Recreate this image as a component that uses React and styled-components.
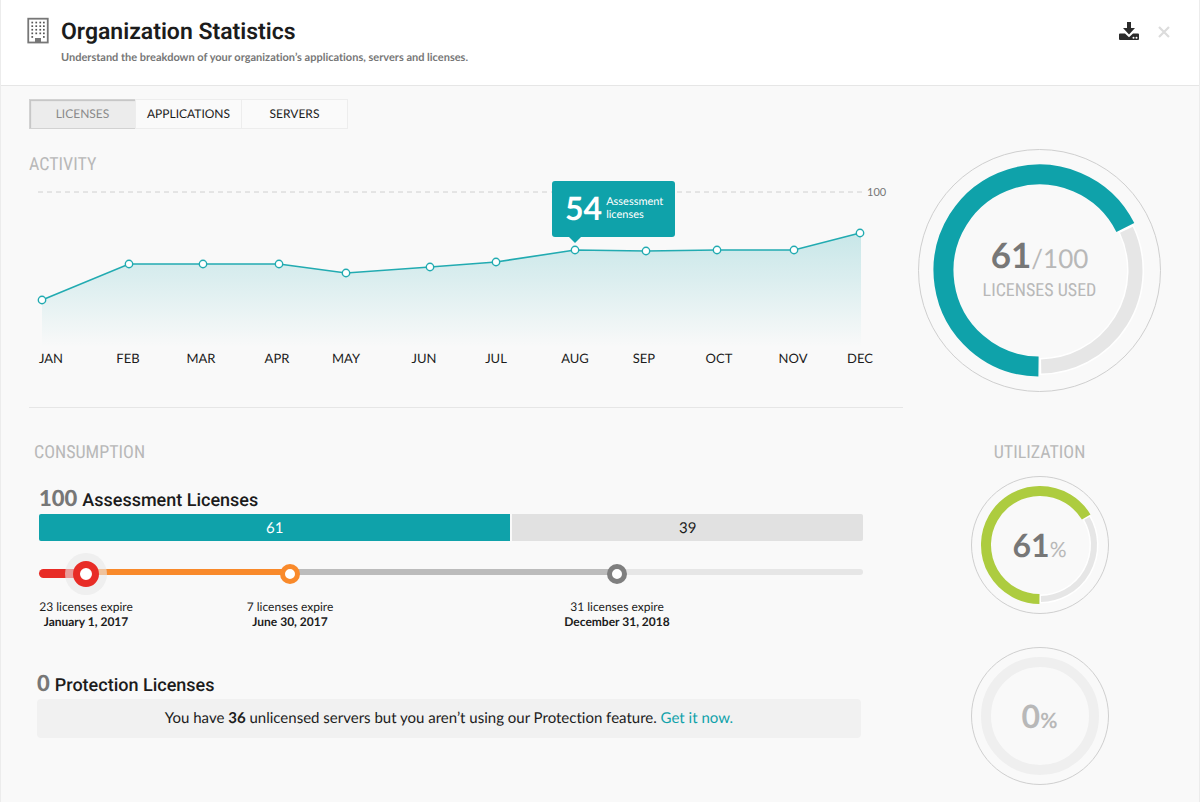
import React from 'react';
import styled, { createGlobalStyle, ThemeProvider } from 'styled-components';

const theme = {
  teal: '#0fa2aa',
  green: '#adcc3f',
  red: '#e82c26',
  orange: '#f98a2b',
  ink: '#1c1c1c',
  number: '#777',
  muted: '#b8b8b8',
  page: '#f9f9f9',
  line: '#e6e6e6',
  lato: "Lato, 'Liberation Sans', sans-serif",
  roboto: "Roboto, 'Liberation Sans', sans-serif",
  condensed: "'Roboto Condensed', 'Liberation Sans Narrow', Roboto, sans-serif",
};

const GlobalStyle = createGlobalStyle`
  *, *::before, *::after { box-sizing: border-box; }
  body { margin: 0; background: ${theme.page}; text-rendering: geometricPrecision; }
  button { text-rendering: inherit; }
  h1, h2, h3, p, ul { margin: 0; padding: 0; }
  svg { display: block; }
`;

const Panel = styled.div`
  min-height: 100vh;
  background: ${(p) => p.theme.page};
  border: solid #ececec;
  border-width: 0 1px;
  color: ${(p) => p.theme.ink};
  font-family: ${(p) => p.theme.lato};
  font-variant-ligatures: none;
`;

const Header = styled.header`
  display: flex;
  align-items: flex-start;
  gap: 12px;
  padding: 17px 27px 19px 26px;
  background: #fff;
  border-bottom: 1px solid ${(p) => p.theme.line};
`;

const HeaderText = styled.div`
  flex: 1;
`;

const Title = styled.h1`
  font: 600 23px/30px ${(p) => p.theme.roboto};
`;

const Subtitle = styled.p`
  margin-top: 3px;
  font-size: 11px;
  line-height: 16px;
  font-weight: 700;
  color: ${(p) => p.theme.number};
`;

const Actions = styled.div`
  display: flex;
  align-items: center;
  gap: 16px;
  height: 28px;
`;

const IconButton = styled.button`
  padding: 0;
  border: 0;
  background: none;
  cursor: pointer;
`;

const Body = styled.main`
  padding: 13px 38px 16px 28px;
`;

const Tabs = styled.div`
  display: flex;
  margin-bottom: 20px;
`;

const Tab = styled.button`
  width: 107px;
  height: 30px;
  margin-right: -1px;
  padding: 0;
  border: 1px solid ${(p) => (p.$active ? '#d2d2d2' : '#ededed')};
  box-shadow: ${(p) => (p.$active ? 'inset 1px 1px 1px #c4c4c4' : 'none')};
  background: ${(p) => (p.$active ? '#ececec' : '#fafafa')};
  color: ${(p) => (p.$active ? '#8a8a8a' : p.theme.ink)};
  font: 400 12px/16px ${(p) => p.theme.lato};
  cursor: pointer;
`;

const Columns = styled.div`
  display: grid;
  grid-template-columns: minmax(0, 1fr) 243px;
  gap: 15px;
`;

const Side = styled.aside`
  display: flex;
  flex-direction: column;
  align-items: center;
`;

const Heading = styled.h2`
  height: 30px;
  font: 400 18px/32px ${(p) => p.theme.condensed};
  color: ${(p) => p.theme.muted};
`;

const SideHeading = styled(Heading)`
  margin: 45px 0 9px;
`;

const RingCaption = styled(Heading)`
  height: 28px;
`;

const Chart = styled.div`
  position: relative;
  margin-bottom: 28px;
`;

const ChartSvg = styled.svg`
  width: 100%;
  height: auto;
  font-family: ${(p) => p.theme.lato};
`;

const Tooltip = styled.div`
  position: absolute;
  display: flex;
  align-items: center;
  gap: 4px;
  width: 123px;
  height: 56px;
  margin: 0 0 5px -23px;
  padding: 0 0 3px 13px;
  border-radius: 3px;
  background: ${(p) => p.theme.teal};
  color: #fff;
  font-size: 11px;
  line-height: 13px;

  &::after {
    content: '';
    position: absolute;
    top: 100%;
    left: 17px;
    border: 6px solid transparent;
    border-top-color: ${(p) => p.theme.teal};
    border-bottom: 0;
  }
`;

const TooltipValue = styled.strong`
  font-size: 32px;
  line-height: 52px;
`;

const Divider = styled.hr`
  height: 1px;
  margin: 0 0 29px;
  border: 0;
  background: ${(p) => p.theme.line};
`;

const Consumption = styled.section`
  padding: 0 40px 0 5px;
`;

const LicenseGroup = styled.section`
  margin: ${(p) => (p.$first ? '19px 0 0 5px' : '42px 2px 0 3px')};
`;

const LicenseTitle = styled.h3`
  display: flex;
  align-items: baseline;
  gap: 5px;
  height: 28px;
  font: 500 18px/24px ${(p) => p.theme.roboto};
`;

const Count = styled.span`
  font: 900 22px/24px ${(p) => p.theme.lato};
  color: ${(p) => p.theme.number};
`;

const UsageBar = styled.div`
  display: flex;
  gap: 2px;
  overflow: hidden;
  border-radius: 2px;
`;

const Usage = styled.div`
  flex: ${(p) => p.$weight} 1 0;
  height: 27px;
  background: ${(p) => (p.$used ? p.theme.teal : '#e1e1e1')};
  color: ${(p) => (p.$used ? '#fff' : p.theme.ink)};
  font-size: 15px;
  line-height: 28px;
  text-align: center;
`;

const Timeline = styled.ul`
  display: flex;
  margin-top: 28px;
  list-style: none;
`;

const Segment = styled.li`
  flex: ${(p) => p.$weight} 1 0;
  min-width: 0;
  display: flex;
  flex-direction: column;
  align-items: flex-end;
  gap: 20px;
`;

const Track = styled.div`
  position: relative;
  width: 100%;
  height: 10px;

  &::before {
    content: '';
    display: block;
    height: ${(p) => (p.$thick ? 9 : 6)}px;
    background: ${(p) => p.$color};
    border-radius: ${(p) => p.$radius || 0};
  }
`;

const Marker = styled.span`
  position: absolute;
  z-index: 1;
  top: 50%;
  left: 100%;
  width: ${(p) => p.$size}px;
  height: ${(p) => p.$size}px;
  transform: translate(-50%, -50%);
  border: ${(p) => p.$ring}px solid ${(p) => p.$color};
  border-radius: 50%;
  background: #fff;
  box-shadow: ${(p) => (p.$halo ? '0 0 0 8px rgba(232, 232, 232, 0.6)' : 'none')};
`;

const Caption = styled.div`
  display: flex;
  justify-content: center;
  width: 0;
  white-space: nowrap;
  text-align: center;
  font-size: 12px;
  line-height: 15px;
`;

const Expiry = styled.strong`
  display: block;
`;

const Notice = styled.p`
  padding: 10px;
  border-radius: 4px;
  background: #f1f1f1;
  font-size: 15px;
  line-height: 19px;
  text-align: center;
`;

const NoticeLink = styled.a`
  color: ${(p) => p.theme.teal};
  text-decoration: none;
`;

const RingBox = styled.div`
  display: grid;
  place-items: center;
  margin-bottom: ${(p) => p.$gap || 0}px;

  > * { grid-area: 1 / 1; }
`;

const RingText = styled.div`
  padding-top: ${(p) => (p.$large ? 0 : 4)}px;
  text-align: center;
  color: ${(p) => p.theme.muted};
  line-height: ${(p) => (p.$large ? 34 : 40)}px;
  font-size: ${(p) => (p.$large ? 26 : 21)}px;
`;

const RingValue = styled.strong`
  font-size: ${(p) => (p.$large ? 35 : 32)}px;
  color: ${(p) => (p.$empty ? p.theme.muted : p.theme.number)};
`;

const RingUnit = styled.span`
  font-weight: ${(p) => (p.$heavy ? 700 : 400)};
`;

const point = (c, r, deg) => {
  const a = ((deg + 180) * Math.PI) / 180;
  return `${c + r * Math.sin(a)} ${c - r * Math.cos(a)}`;
};

const arc = (c, r, from, to) =>
  `M${point(c, r, from)}A${r} ${r} 0 ${to - from > 180 ? 1 : 0} 1 ${point(c, r, to)}`;

function Ring({ size, radius, width, restWidth, sweep, color, gap, children }) {
  const c = size / 2;
  return (
    <RingBox $gap={gap}>
      <svg width={size} height={size} fill="none" aria-hidden="true">
        <circle cx={c} cy={c} r={c - 0.5} stroke="#cfcfcf" />
        {sweep ? (
          <>
            <path d={arc(c, radius, sweep, 359.9)} stroke="#fff" strokeWidth={restWidth + 3} />
            <path d={arc(c, radius, sweep + 1.5, 359)} stroke="#e6e6e6" strokeWidth={restWidth} />
            <path d={arc(c, radius, 0.6, sweep)} stroke={color} strokeWidth={width} />
          </>
        ) : (
          <circle cx={c} cy={c} r={radius} stroke="#efefef" strokeWidth={width} />
        )}
      </svg>
      {children}
    </RingBox>
  );
}

const CHART = { width: 874, height: 200, base: 168, limit: 13 };

const MONTHS = [
  { name: 'JAN', x: 13, y: 121, label: 22 },
  { name: 'FEB', x: 100, y: 85, label: 99 },
  { name: 'MAR', x: 174, y: 85, label: 172 },
  { name: 'APR', x: 250, y: 85, label: 248 },
  { name: 'MAY', x: 317, y: 94, label: 317 },
  { name: 'JUN', x: 401, y: 88, label: 395 },
  { name: 'JUL', x: 467, y: 83, label: 467 },
  { name: 'AUG', x: 546, y: 71, label: 546 },
  { name: 'SEP', x: 617, y: 72, label: 615 },
  { name: 'OCT', x: 688, y: 71, label: 690 },
  { name: 'NOV', x: 765, y: 71, label: 764 },
  { name: 'DEC', x: 831, y: 54, label: 831 },
];

function ActivityChart() {
  const line = MONTHS.map((m) => `${m.x},${m.y}`).join(' ');
  const first = MONTHS[0];
  const last = MONTHS[MONTHS.length - 1];
  const selected = MONTHS[7];
  return (
    <Chart>
      <ChartSvg viewBox={`0 0 ${CHART.width} ${CHART.height}`} role="img" aria-label="Licenses used per month">
        <defs>
          <linearGradient id="fill" x1="0" y1="0" x2="0" y2="1">
            <stop offset="0" stopColor={theme.teal} stopOpacity="0.21" />
            <stop offset="0.35" stopColor={theme.teal} stopOpacity="0.14" />
            <stop offset="1" stopColor={theme.teal} stopOpacity="0" />
          </linearGradient>
        </defs>
        <line x1="9" x2="836" y1={CHART.limit} y2={CHART.limit} stroke="#d0d0d0" strokeDasharray="5 4" />
        <text x="838" y="17" fontSize="11" fill="#777">100</text>
        <polygon
          points={`${first.x},${CHART.base} ${line} ${last.x + 1},${last.y} ${last.x + 1},${CHART.base}`}
          fill="url(#fill)"
        />
        <polyline points={line} fill="none" stroke="#22abb1" strokeWidth="1.6" />
        {MONTHS.map((m) => (
          <g key={m.name}>
            <circle cx={m.x} cy={m.y} r="3.7" fill="#fff" stroke="#22abb1" strokeWidth="1.4" />
            <text x={m.label} y="184" fontSize="13" textAnchor="middle" fill={theme.ink}>
              {m.name}
            </text>
          </g>
        ))}
      </ChartSvg>
      <Tooltip
        role="status"
        style={{
          left: `${(selected.x / CHART.width) * 100}%`,
          bottom: `${(1 - (selected.y - 8) / CHART.height) * 100}%`,
        }}
      >
        <TooltipValue>54</TooltipValue>
        <span>
          Assessment
          <br />
          licenses
        </span>
      </Tooltip>
    </Chart>
  );
}

const STOPS = [
  { weight: 47, color: theme.red, marker: theme.red, size: 26, ring: 7, halo: true, thick: true, radius: '5px 0 0 5px', text: '23 licenses expire', date: 'January 1, 2017' },
  { weight: 204, color: theme.orange, marker: theme.orange, size: 20, ring: 5, text: '7 licenses expire', date: 'June 30, 2017' },
  { weight: 327, color: '#bcbcbc', marker: '#7f7f7f', size: 20, ring: 5, text: '31 licenses expire', date: 'December 31, 2018' },
  { weight: 246, color: '#e6e6e6', radius: '0 3px 3px 0' },
];

function BuildingIcon() {
  const cols = [6, 10, 14, 17.6];
  const rows = [6, 9.6, 13.2, 16.8, 20.4];
  return (
    <svg width="22" height="28" viewBox="0 0 22 28" aria-hidden="true">
      <rect x="1.25" y="1.7" width="19.5" height="23.8" fill="#fff" stroke="#777" strokeWidth="1.8" />
      {rows.map((y, r) =>
        cols.map((x, c) =>
          r === 4 && (c === 1 || c === 2) ? null : (
            <rect key={`${x}-${y}`} x={x - 1.6} y={y - 1.3} width="1.7" height="1.7" fill="#555" />
          ),
        ),
      )}
      <rect x="8" y="21" width="6" height="4.5" fill="#777" />
    </svg>
  );
}

function DownloadIcon() {
  return (
    <svg width="22" height="20" viewBox="0 0 22 20" aria-hidden="true">
      <path d="M9 1h4v6h4l-6 6.400L5 7h4z" fill="#2b2b2b" />
      <path d="M2 12.600h5L11 16.200l4-3.600H20a1 1 0 0 1 1 1v4.400a1 1 0 0 1-1 1H2a1 1 0 0 1-1-1v-4.400a1 1 0 0 1 1-1z" fill="#2b2b2b" />
      <circle cx="15.500" cy="16.800" r="1" fill="#fff" />
      <circle cx="18.500" cy="16.800" r="1" fill="#fff" />
    </svg>
  );
}

function CloseIcon() {
  return (
    <svg width="16" height="16" viewBox="0 0 16 16" aria-hidden="true">
      <path d="M3 4l10 10M13 4L3 14" stroke="#dcdcdc" strokeWidth="2.200" />
    </svg>
  );
}

export default function App() {
  const [tab, setTab] = React.useState('LICENSES');
  return (
    <ThemeProvider theme={theme}>
      <GlobalStyle />
      <Panel>
        <Header>
          <BuildingIcon />
          <HeaderText>
            <Title>Organization Statistics</Title>
            <Subtitle>Understand the breakdown of your organization’s applications, servers and licenses.</Subtitle>
          </HeaderText>
          <Actions>
            <IconButton aria-label="Download"><DownloadIcon /></IconButton>
            <IconButton aria-label="Close"><CloseIcon /></IconButton>
          </Actions>
        </Header>
        <Body>
          <Tabs role="tablist">
            {['LICENSES', 'APPLICATIONS', 'SERVERS'].map((name) => (
              <Tab key={name} role="tab" aria-selected={tab === name} $active={tab === name} onClick={() => setTab(name)}>
                {name}
              </Tab>
            ))}
          </Tabs>
          <Columns>
            <div>
              <Heading>ACTIVITY</Heading>
              <ActivityChart />
              <Divider />
              <Consumption>
                <Heading>CONSUMPTION</Heading>
                <LicenseGroup $first>
                  <LicenseTitle><Count>100</Count> Assessment Licenses</LicenseTitle>
                  <UsageBar>
                    <Usage $used $weight={472}>61</Usage>
                    <Usage $weight={351}>39</Usage>
                  </UsageBar>
                  <Timeline>
                    {STOPS.map((s) => (
                      <Segment key={s.weight} $weight={s.weight}>
                        <Track $color={s.color} $thick={s.thick} $radius={s.radius}>
                          {s.marker && <Marker $color={s.marker} $size={s.size} $ring={s.ring} $halo={s.halo} />}
                        </Track>
                        {s.text && (
                          <Caption>
                            <div>
                              {s.text}
                              <Expiry>{s.date}</Expiry>
                            </div>
                          </Caption>
                        )}
                      </Segment>
                    ))}
                  </Timeline>
                </LicenseGroup>
                <LicenseGroup>
                  <LicenseTitle><Count>0</Count> Protection Licenses</LicenseTitle>
                  <Notice>
                    You have <strong>36</strong> unlicensed servers but you aren’t using our Protection feature.{' '}
                    <NoticeLink href="#protection">Get it now.</NoticeLink>
                  </Notice>
                </LicenseGroup>
              </Consumption>
            </div>
            <Side>
              <Ring size={243} radius={96} width={20} restWidth={14} sweep={243.4} color={theme.teal}>
                <RingText $large>
                  <RingValue $large>61</RingValue>
                  <RingUnit>/100</RingUnit>
                  <RingCaption as="div">LICENSES USED</RingCaption>
                </RingText>
              </Ring>
              <SideHeading>UTILIZATION</SideHeading>
              <Ring size={138} radius={54} width={10} restWidth={6} sweep={238.8} color={theme.green} gap={33}>
                <RingText>
                  <RingValue>61</RingValue>
                  <RingUnit>%</RingUnit>
                </RingText>
              </Ring>
              <Ring size={138} radius={54} width={10}>
                <RingText>
                  <RingValue $empty>0</RingValue>
                  <RingUnit $heavy>%</RingUnit>
                </RingText>
              </Ring>
            </Side>
          </Columns>
        </Body>
      </Panel>
    </ThemeProvider>
  );
}
